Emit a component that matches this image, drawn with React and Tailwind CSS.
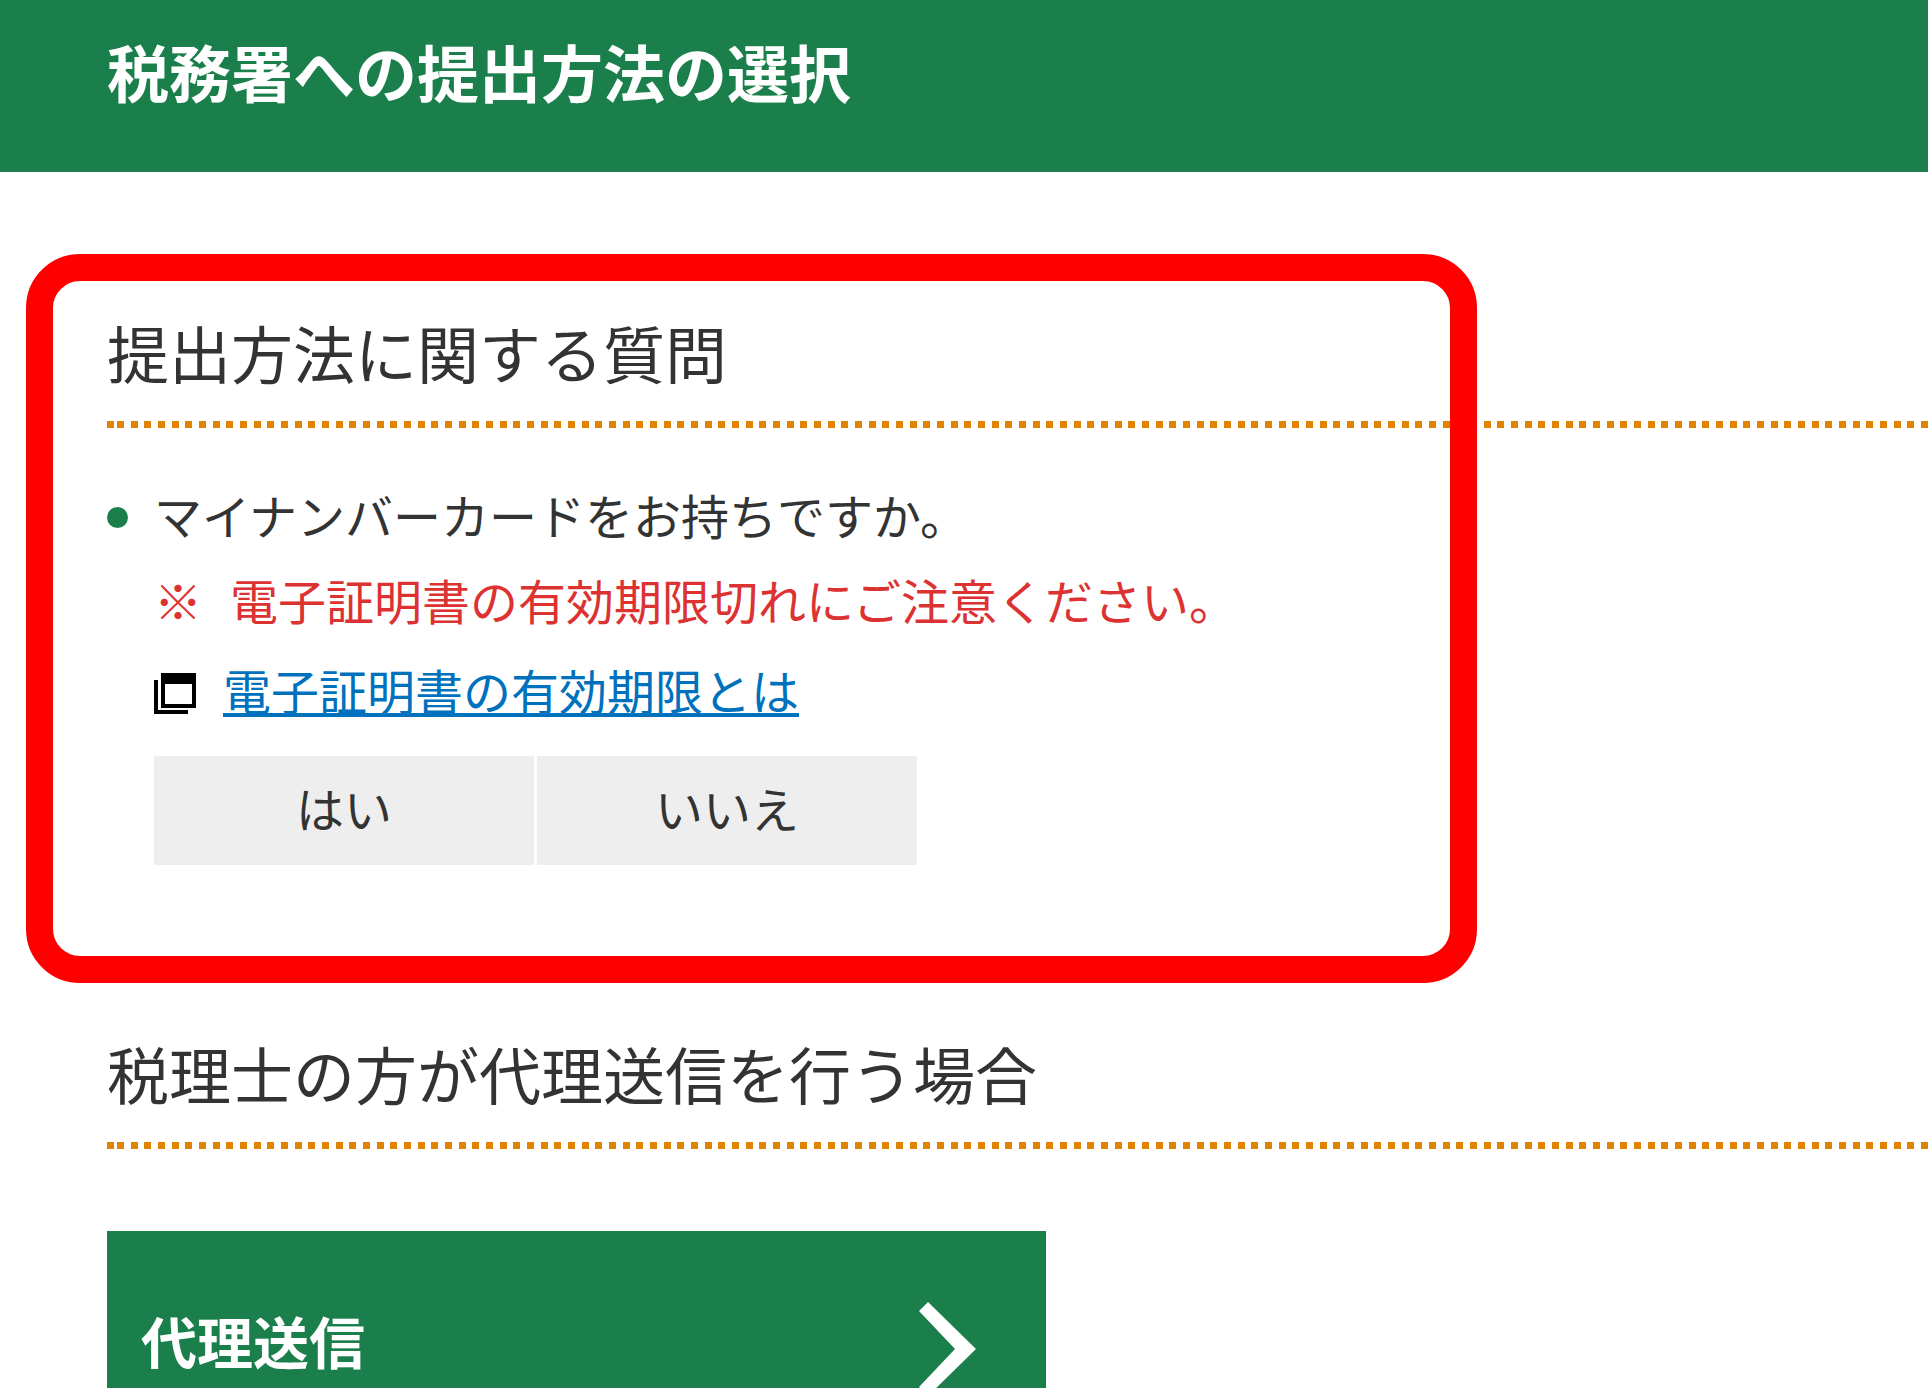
import React, { useState } from "react";

const CHOICES = ["はい", "いいえ"];

function DottedRule() {
  return (
    <div className="flex h-[7px] gap-[3px]" aria-hidden="true">
      <span className="w-[7px] bg-[#e08300]" />
      {/* three dots per 41px tile */}
      <span className="flex-1 bg-[repeating-linear-gradient(90deg,#e08300_0px_7px,transparent_7px_14px,#e08300_14px_21px,transparent_21px_27px,#e08300_27px_34px,transparent_34px_41px)]" />
    </div>
  );
}

function SectionTitle({ children }) {
  return (
    <>
      <h2 className="pb-[29px] text-[62px] leading-[80px] font-normal">{children}</h2>
      <DottedRule />
    </>
  );
}

function WindowIcon() {
  return (
    <svg className="mt-[8px] h-[42px] w-[42px] shrink-0" viewBox="0 0 42 42" fill="#000" aria-hidden="true">
      <path d="M7 0H42V35H7ZM11 11V31H38V11Z" fillRule="evenodd" />
      <path d="M0 7H4V37H34V41H0Z" />
    </svg>
  );
}

function ArrowIcon() {
  return (
    <svg className="h-[94px] w-[57px] shrink-0" viewBox="0 0 57 94" fill="#fff" aria-hidden="true">
      <path d="M9 0L57 47L9 94L0 85L36 47L0 9Z" />
    </svg>
  );
}

export default function App() {
  const [answer, setAnswer] = useState(null);

  return (
    <div className="h-screen overflow-hidden bg-white font-['Noto_Sans_CJK_JP',sans-serif] text-[#333]">
      <header className="bg-[#1a7f4b] px-[107px] pt-[31px] pb-[61px] text-white">
        <h1 className="text-[62px] leading-[80px] font-bold">税務署への提出方法の選択</h1>
      </header>

      <main>
        <section className="relative pt-[140px] pl-[107px]">
          <SectionTitle>提出方法に関する質問</SectionTitle>

          <div className="flex gap-[26px] pt-[44px] text-[48px] leading-[85px] font-normal">
            <span className="mt-[35px] size-[21px] shrink-0 rounded-full bg-[#1a7f4b]" />
            <div>
              <p id="question">マイナンバーカードをお持ちですか。</p>
              <p className="flex gap-[28px] text-[#dc3232]">
                <span>※</span>
                <span>電子証明書の有効期限切れにご注意ください。</span>
              </p>
              <p className="flex items-center gap-[27px] pt-[5px]">
                <WindowIcon />
                <a href="#expiry" className="text-[#0071bc] underline decoration-[4px] underline-offset-[3px]">
                  電子証明書の有効期限とは
                </a>
              </p>
              <div className="flex gap-[3px] pt-[24px]" role="group" aria-labelledby="question">
                {CHOICES.map((label) => (
                  <button
                    key={label}
                    type="button"
                    aria-pressed={answer === label}
                    onClick={() => setAnswer(label)}
                    className="h-[109px] w-[380px] bg-[#eee] pb-[6px]"
                  >
                    {label}
                  </button>
                ))}
              </div>
            </div>
          </div>

          {/* highlight frame */}
          <div className="pointer-events-none absolute top-[82px] left-[26px] h-[729px] w-[1451px] rounded-[54px] border-[27px] border-[#f00]" />
        </section>

        <section className="pt-[168px] pl-[107px]">
          <SectionTitle>税理士の方が代理送信を行う場合</SectionTitle>
          <button
            type="button"
            className="mt-[82px] flex h-[236px] w-[939px] items-center justify-between bg-[#1a7f4b] pr-[70px] pl-[34px] text-white"
          >
            <span className="pb-[18px] text-[56px] leading-[72px] font-bold">代理送信</span>
            <ArrowIcon />
          </button>
        </section>
      </main>
    </div>
  );
}
